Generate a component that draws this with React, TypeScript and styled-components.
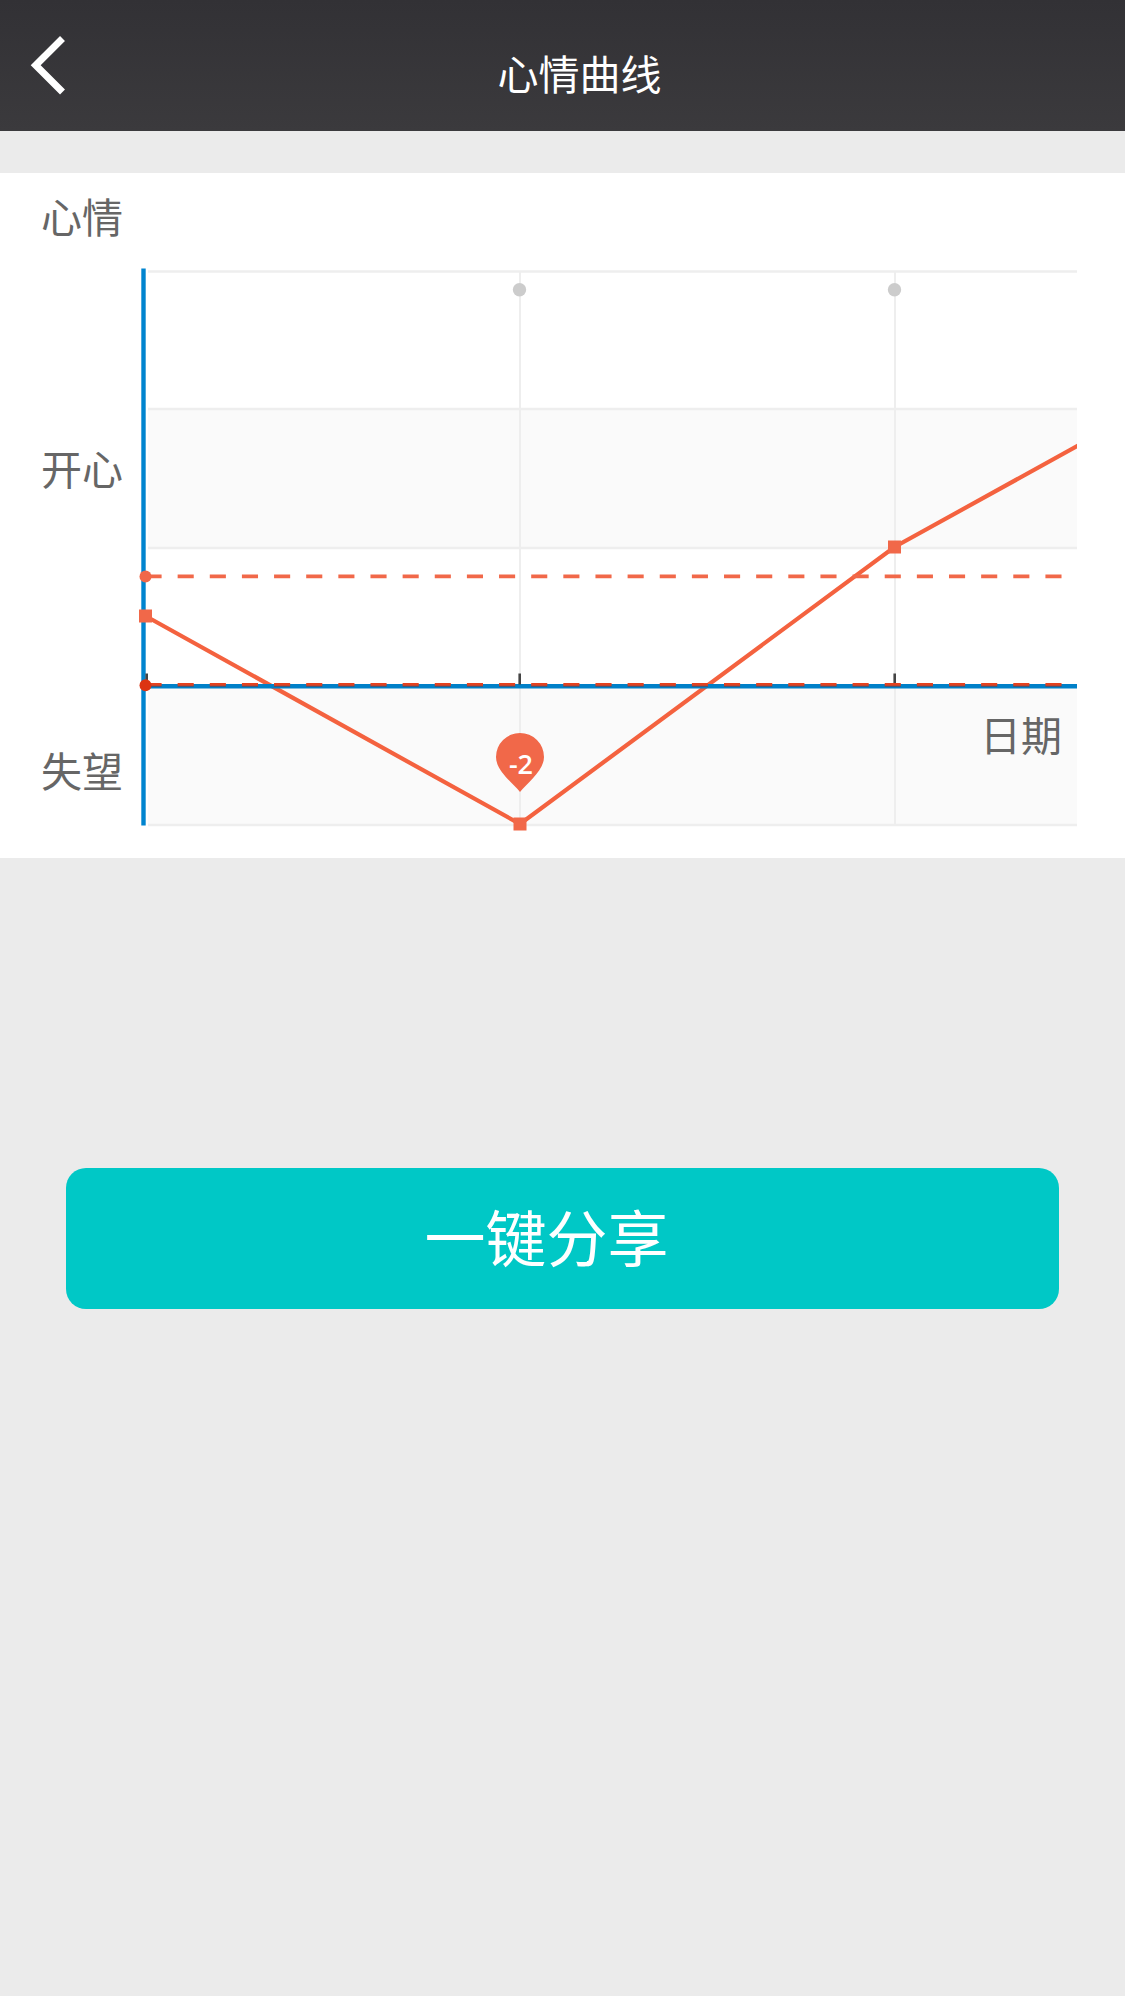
import React from "react";
import styled, { createGlobalStyle } from "styled-components";

const GlobalStyle = createGlobalStyle`
  *, *::before, *::after { box-sizing: border-box; }
  body {
    margin: 0;
    background: #fff;
    font-family: "Noto Sans CJK SC", "Noto Sans", sans-serif;
  }
`;

const Page = styled.div`
  min-height: calc(100vh - 5px);
  display: flex;
  flex-direction: column;
  background: #ebebeb;
`;

const Header = styled.header`
  display: grid;
  grid-template-columns: 100px 1fr 66px;
  height: 131px;
  background: linear-gradient(#323135, #3b3a3d);
`;

const BackButton = styled.button`
  display: flex;
  align-items: center;
  padding: 0 0 2px 28px;
  border: 0;
  background: none;
  color: #fff;
  cursor: pointer;
`;

const Title = styled.h1`
  margin: 0;
  padding-top: 12px;
  align-self: center;
  text-align: center;
  color: #fff;
  font-size: 41px;
  line-height: 48px;
  font-weight: 400;
`;

const ChartCard = styled.section`
  display: grid;
  grid-template-columns: 136px 1fr;
  margin-top: 42px;
  padding: 18px 48px 24px 0;
  background: #fff;
`;

const AxisLabels = styled.div`
  display: flex;
  flex-direction: column;
  padding-left: 41px;
`;

const AxisLabel = styled.span<{ $gap?: number }>`
  margin-top: ${(p) => p.$gap ?? 0}px;
  color: #666;
  font-size: 41px;
  line-height: 48px;
  white-space: nowrap;
`;

const Plot = styled.div`
  position: relative;
  margin-top: 69px;
`;

const PlotSvg = styled.svg`
  display: block;
  width: 100%;
  height: auto;
`;

const DateLabel = styled(AxisLabel)`
  position: absolute;
  right: 15px;
  bottom: 77px;
`;

const Actions = styled.div`
  padding: 310px 66px 0;
`;

const ShareButton = styled.button`
  display: block;
  width: 100%;
  height: 141px;
  padding: 0 32px 6px 0;
  border: 0;
  border-radius: 20px;
  background: #00c8c6;
  color: #fff;
  font-family: inherit;
  font-size: 61px;
  line-height: 72px;
  cursor: pointer;
`;

const RIGHT = 1077;
const ROWS = [271.5, 409, 548, 825];
const DAYS = [520, 895];
const POINTS = [
  [145.5, 616],
  [520, 824],
  [894.5, 547],
];

function MoodChart() {
  return (
    <PlotSvg viewBox="136 260 941 574" role="img" aria-label="心情曲线">
      <rect x="148" y="409" width={RIGHT - 148} height="139" fill="#fafafa" />
      <rect x="148" y="687" width={RIGHT - 148} height="138" fill="#fafafa" />
      <g stroke="#eee" strokeWidth="2.5">
        {ROWS.map((y) => (
          <line key={y} x1="148" x2={RIGHT} y1={y} y2={y} />
        ))}
        {DAYS.map((x) => (
          <line key={x} x1={x} x2={x} y1="272" y2="825" strokeWidth="2" />
        ))}
      </g>
      {DAYS.map((x) => (
        <circle key={x} cx={x - 0.5} cy="289.7" r="6.7" fill="#ccc" />
      ))}
      <polyline
        points="145.5,616 520,824 894.5,547 1080,444.5"
        fill="none"
        stroke="#f4623f"
        strokeWidth="4.2"
      />
      <line x1="143.5" x2="143.5" y1="268.5" y2="825.5" stroke="#0084cf" strokeWidth="4.4" />
      <line x1="143" x2={RIGHT} y1="686.2" y2="686.2" stroke="#0080c8" strokeWidth="4.4" />
      <g stroke="#444" strokeWidth="2.6">
        <line x1="146.7" x2="146.7" y1="673.5" y2="684" />
        <line x1="519.7" x2="519.7" y1="673.5" y2="684.5" />
        <line x1="894.7" x2="894.7" y1="673.5" y2="684.5" />
      </g>
      <line
        x1="145.5" x2="1063" y1="576.4" y2="576.4"
        stroke="#f16849" strokeWidth="3.6" strokeDasharray="16.1 16.04"
      />
      <line
        x1="145.5" x2="1063" y1="686" y2="686"
        stroke="#5c4a58" strokeWidth="1.6" strokeDasharray="16.1 16.04"
      />
      <line
        x1="145.5" x2="1063" y1="684.4" y2="684.4"
        stroke="#e4421f" strokeWidth="2.6" strokeDasharray="16.1 16.04"
      />
      <circle cx="145.5" cy="576.5" r="6" fill="#f16849" />
      <circle cx="145.5" cy="685.3" r="6" fill="#dc3412" />
      {POINTS.map(([x, y]) => (
        <rect key={x} x={x - 6.5} y={y - 6.5} width="13" height="13" fill="#f16849" />
      ))}
      <path
        d="M520 792 C513 783 496 771 496 757 A24 24 0 0 1 544 757 C544 771 527 783 520 792Z"
        fill="#f16849"
      />
      <text
        x="521" y="774" textAnchor="middle" fill="#fff"
        fontFamily='"Open Sans", sans-serif' fontSize="27" fontWeight="600"
      >
        -2
      </text>
    </PlotSvg>
  );
}

export default function App() {
  return (
    <Page>
      <GlobalStyle />
      <Header>
        <BackButton type="button" aria-label="返回">
          <svg width="40" height="64" viewBox="28 33 40 64" fill="none" aria-hidden="true">
            <path d="M62.5 38.5L35.7 65.2L62.5 92" stroke="currentColor" strokeWidth="7" />
          </svg>
        </BackButton>
        <Title>心情曲线</Title>
      </Header>
      <main>
        <ChartCard>
          <AxisLabels>
            <AxisLabel>心情</AxisLabel>
            <AxisLabel $gap={204}>开心</AxisLabel>
            <AxisLabel $gap={254}>失望</AxisLabel>
          </AxisLabels>
          <Plot>
            <MoodChart />
            <DateLabel>日期</DateLabel>
          </Plot>
        </ChartCard>
        <Actions>
          <ShareButton type="button">一键分享</ShareButton>
        </Actions>
      </main>
    </Page>
  );
}
